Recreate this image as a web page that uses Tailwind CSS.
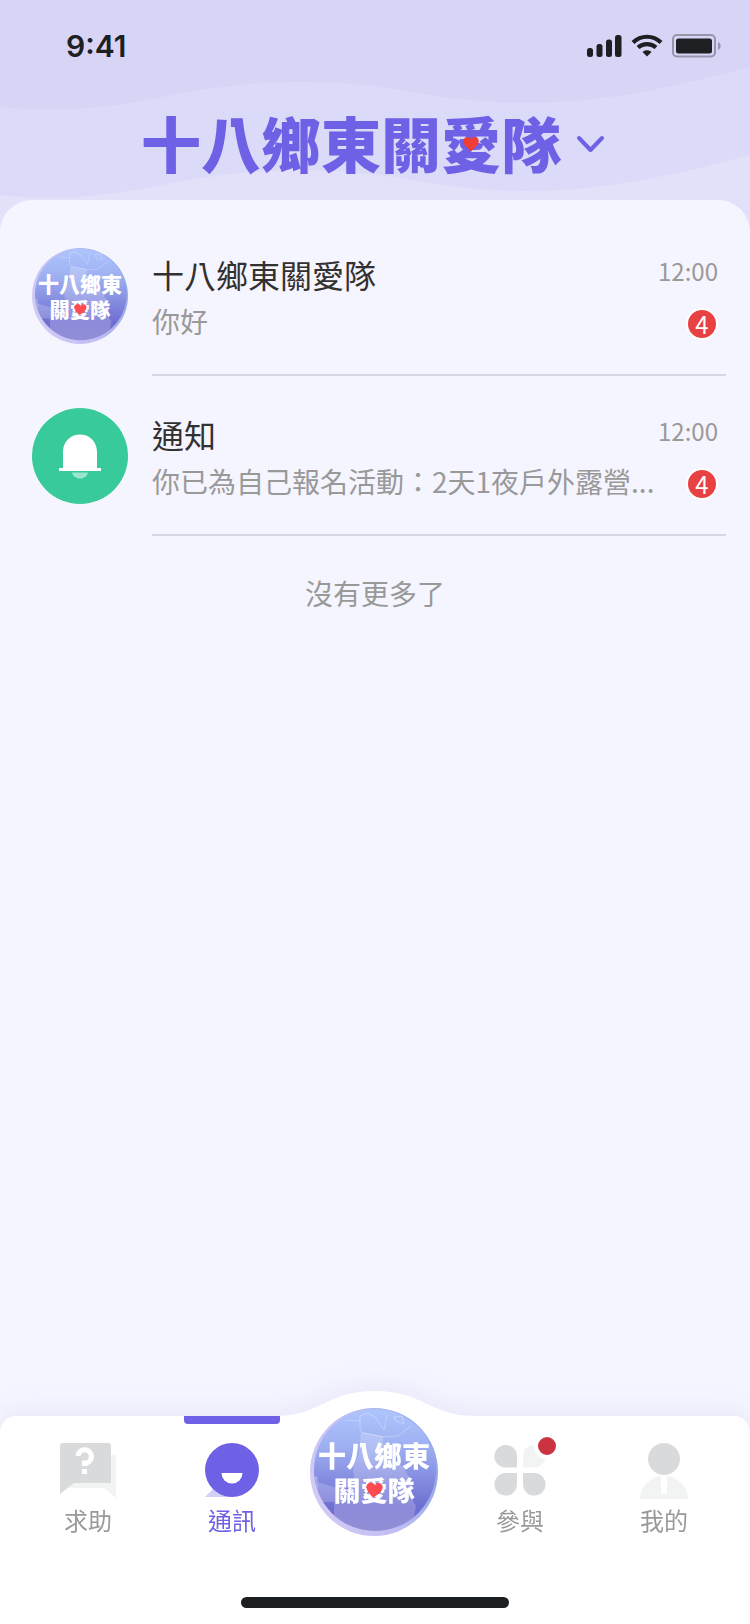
<!DOCTYPE html>
<html lang="zh-Hant">

<head>
    <meta charset="UTF-8">
    <meta name="viewport" content="width=device-width, initial-scale=1.0">
    <title>十八鄉東關愛隊</title>
    <script src="https://cdn.jsdelivr.net/npm/@tailwindcss/browser@4"></script>
</head>

<body class="font-['Noto_Sans_CJK_TC',sans-serif] bg-[#e3e0f9]">

    <!-- shared parts of the team logo -->
    <svg class="absolute w-0 h-0" aria-hidden="true">
        <defs>
            <linearGradient id="logo-ring" x1="0" y1="0.7" x2="1" y2="0.3">
                <stop offset="0" stop-color="#d3cbf6" />
                <stop offset="0.5" stop-color="#c0bdf4" />
                <stop offset="1" stop-color="#8ba6e4" />
            </linearGradient>
            <linearGradient id="logo-fill" x1="0" y1="0" x2="0" y2="1">
                <stop offset="0" stop-color="#adc5fd" />
                <stop offset="0.3" stop-color="#9fb0f2" />
                <stop offset="0.8" stop-color="#6f6fd1" />
                <stop offset="1" stop-color="#7672cc" />
            </linearGradient>
            <clipPath id="logo-clip">
                <circle cx="65" cy="62" r="61" />
            </clipPath>
        </defs>
        <symbol id="logo-bg" viewBox="0 0 128 128">
            <circle cx="64" cy="64" r="64" fill="url(#logo-ring)" />
            <circle cx="65" cy="62" r="61" fill="url(#logo-fill)" />
            <g clip-path="url(#logo-clip)">
                <path d="M51 24L73 28V49C80 50 85 52 90 56C96 62 99 68 101 76V90L106 98L104 108L90 128H24V94H0V69H7V74L24 79L40 82L44 70L43 60L49 46Z" fill="#fff" fill-opacity="0.2" />
                <path d="M35 12L50 13L50 8L57 5L65 9L74 22L77 7M84 9L92 8L94 16L86 13ZM50 13V22L54 25L73 29L88 28L101 18" fill="none" stroke="#fff" stroke-opacity="0.3" />
                <path d="M0 69H7V94" fill="none" stroke="#fff" stroke-opacity="0.3" />
            </g>
        </symbol>
        <symbol id="logo-heart" viewBox="0 0 128 128">
            <path d="M63 89C58 84 55 79 58 76C61 74 64 75 65 78C67 74 71 75 72 78C73 82 69 86 63 89Z" fill="#ff4b50" stroke="#ff4b50" />
        </symbol>
    </svg>

    <div class="flex flex-col min-h-screen">

        <header class="relative">
            <svg class="absolute inset-x-0 top-0 w-full h-[240px]" viewBox="0 0 750 240" preserveAspectRatio="none" aria-hidden="true">
                <path fill="#dcdaf9" d="M0 195C50 200 90 198 140 189C200 178 240 170 300 170C400 170 430 191 530 191C610 191 690 171 750 155V0H0Z" />
                <path fill="#d8d4f6" d="M0 107C50 112 90 110 140 101C200 90 240 82 300 82C400 82 430 103 530 103C610 103 690 83 750 67V0H0Z" />
            </svg>

            <div class="relative flex items-center justify-between h-[92px] pl-[66px] pr-[28px] text-[#1d2023]">
                <span class="font-['Inter',sans-serif] text-[30px] leading-9 font-semibold">9:41</span>
                <div class="flex items-center gap-[9px]">
                    <svg class="w-[35px] h-6" viewBox="0 0 35 24" fill="currentColor">
                        <rect x="0" y="14" width="6" height="9" rx="2.500" />
                        <rect x="9.500" y="10" width="6" height="13" rx="2.500" />
                        <rect x="19" y="5.500" width="6" height="17.500" rx="2.500" />
                        <rect x="28" y="1" width="6.500" height="22" rx="2.500" />
                    </svg>
                    <svg class="w-8 h-6" viewBox="0 0 32 24" fill="none" stroke="currentColor" stroke-width="4.200">
                        <path d="M2 8.500C10 0.800 22 0.800 30 8.500" />
                        <path d="M7 13.500C12 9 20 9 25 13.500" />
                        <path d="M11.500 18C14 15.500 18 15.500 20.500 18L16 22.500Z" fill="currentColor" stroke="none" />
                    </svg>
                    <svg class="w-[50px] h-6" viewBox="0 0 50 24">
                        <rect x="1" y="1" width="42" height="21.500" rx="4" fill="none" stroke="#1d2023" stroke-opacity="0.35" stroke-width="2" />
                        <rect x="4" y="4.500" width="36" height="15" rx="2.500" fill="#1d2023" />
                        <path d="M46 8C49.500 9.500 49.500 14.500 46 16Z" fill="#1d2023" fill-opacity="0.35" />
                    </svg>
                </div>
            </div>

            <h1 class="relative flex justify-center pt-5 pb-7">
                <button class="flex items-center gap-3 text-[60px] leading-[60px] font-black text-[#6e61e5]">
                    <span>十八鄉東關<span class="relative">愛<svg class="absolute left-1/2 top-1/2 -translate-x-1/2 -translate-y-1.5 w-4 h-4" viewBox="0 0 16 16"><path fill="#f03e36" d="M8 15.500L1.500 9C-0.500 6.500 0 3 2.500 1.500C4.500 0.300 7 1 8 3C9 1 11.500 0.300 13.500 1.500C16 3 16.500 6.500 14.500 9Z" /></svg></span>隊</span>
                    <svg class="w-9 h-9" viewBox="0 0 36 36" fill="none" stroke="currentColor" stroke-width="4" stroke-linecap="round" stroke-linejoin="round">
                        <path d="M6 14L17.500 26L29 14" />
                    </svg>
                </button>
            </h1>
        </header>

        <main class="relative flex-1 pt-4 rounded-t-[32px] bg-[#f5f5ff]">
            <ul>
                <li class="flex pl-8 pr-6 gap-6">
                    <svg class="w-24 h-24 mt-8 shrink-0" viewBox="0 0 128 128" role="img" aria-label="十八鄉東關愛隊">
                        <use href="#logo-bg" />
                        <text x="64" y="59" fill="#fff" font-size="28" font-weight="900" text-anchor="middle">十八鄉東</text>
                        <text x="64" y="93" fill="#fff" font-size="27" font-weight="900" text-anchor="middle">關愛隊</text>
                        <use href="#logo-heart" />
                    </svg>
                    <a href="#" class="flex flex-1 min-w-0 gap-4 h-40 pt-9 pr-2 border-b-2 border-[#d7d7e2]">
                        <div class="flex-1 min-w-0">
                            <h2 class="text-[32px] leading-11 text-[#333030] truncate">十八鄉東關愛隊</h2>
                            <p class="mt-[3px] text-[28px] leading-11 text-[#999] truncate">你好</p>
                        </div>
                        <div class="flex flex-col items-end pt-[3px]">
                            <time class="text-2xl text-[#999]">12:00</time>
                            <span class="flex items-center justify-center w-8 h-8 mt-[21px] rounded-full border-2 border-white bg-[#e84141] text-2xl leading-7 text-white">4</span>
                        </div>
                    </a>
                </li>
                <li class="flex pl-8 pr-6 gap-6">
                    <svg class="w-24 h-24 mt-8 shrink-0" viewBox="0 0 96 96" role="img" aria-label="通知">
                        <circle cx="48" cy="48" r="48" fill="#38ca9b" />
                        <path fill="#fff" d="M31 60V44C31 20.500 65 20.500 65 44V60H69V63H27V60Z" />
                        <path fill="#fff" fill-opacity="0.5" d="M40 64.500H56C54 72.500 42 72.500 40 64.500Z" />
                    </svg>
                    <a href="#" class="flex flex-1 min-w-0 h-40 pt-9 pr-2 border-b-2 border-[#d7d7e2]">
                        <div class="flex-1 min-w-0">
                            <h2 class="text-[32px] leading-11 text-[#333030] truncate">通知</h2>
                            <p class="mt-[3px] text-[28px] leading-11 text-[#999] truncate">你已為自己報名活動：2天1夜戶外露營...</p>
                        </div>
                        <div class="flex flex-col items-end pt-[3px]">
                            <time class="text-2xl text-[#999]">12:00</time>
                            <span class="flex items-center justify-center w-8 h-8 mt-[21px] rounded-full border-2 border-white bg-[#e84141] text-2xl leading-7 text-white">4</span>
                        </div>
                    </a>
                </li>
            </ul>
            <p class="mt-[35px] text-center text-[28px] leading-11 text-[#999]">沒有更多了</p>
        </main>

        <div class="bg-[#f5f5ff]">
            <nav class="relative rounded-t-2xl bg-white drop-shadow-[0_-4px_14px_rgba(80,70,160,0.08)]">
                <svg class="absolute left-1/2 bottom-full -translate-x-1/2 w-[196px] h-[25px]" viewBox="0 0 196 25" aria-hidden="true">
                    <path fill="#fff" d="M0 25C44 24 50 0 98 0C146 0 152 24 196 25Z" />
                </svg>
                <div class="relative grid grid-cols-5 pl-4 pr-[14px] text-2xl leading-9 text-[#999]">
                    <a href="#" class="flex flex-col items-center gap-[3px] pt-[27px]">
                        <svg class="w-14 h-14" viewBox="0 0 56 56">
                            <path fill="#f2f4f4" d="M51 12H53A3 3 0 0 1 56 15V55L44 45H8L14 40H51Z" />
                            <path fill="#d9dadc" d="M3 0H48A3 3 0 0 1 51 3V40H14L0 51V3A3 3 0 0 1 3 0Z" />
                            <path fill="none" stroke="#fff" stroke-width="5.200" d="M18 13A6.700 6.700 0 1 1 24.600 20.200V23" />
                            <rect x="22" y="26" width="5" height="5" fill="#fff" />
                        </svg>
                        求助
                    </a>
                    <a href="#" class="relative flex flex-col items-center gap-[3px] pt-[27px] text-[#6e61e5]" aria-current="page">
                        <span class="absolute top-0 left-1/2 -translate-x-1/2 w-24 h-2 rounded-b bg-[#6e61e5]"></span>
                        <svg class="w-14 h-14" viewBox="0 0 56 56">
                            <path fill="#d4cff8" d="M1 54L12 43L28 54Z" />
                            <circle cx="28" cy="27" r="27" fill="#6e61e5" />
                            <path fill="#fff" d="M17.500 30H38.500A10.500 10.500 0 0 1 17.500 30Z" />
                        </svg>
                        通訊
                    </a>
                    <a href="#" class="-mt-2 mr-1 justify-self-center">
                        <svg class="w-32 h-32" viewBox="0 0 128 128" role="img" aria-label="十八鄉東關愛隊">
                            <use href="#logo-bg" />
                            <text x="64" y="59" fill="#fff" font-size="28" font-weight="900" text-anchor="middle">十八鄉東</text>
                            <text x="64" y="93" fill="#fff" font-size="27" font-weight="900" text-anchor="middle">關愛隊</text>
                            <use href="#logo-heart" />
                        </svg>
                    </a>
                    <a href="#" class="flex flex-col items-center gap-[3px] pt-[27px]">
                        <span class="relative">
                            <svg class="w-14 h-14" viewBox="0 0 56 56">
                                <g fill="#d9dadc">
                                    <path d="M25 24.500H14A11.300 11.300 0 1 1 25 13Z" />
                                    <path d="M25 30V41A11.300 11.300 0 1 1 14 30Z" />
                                    <path d="M31 30H42A11.300 11.300 0 1 1 31 41Z" />
                                </g>
                                <path fill="#f2f4f4" d="M31 24.500V13A11.300 11.300 0 1 1 42 24.500Z" />
                            </svg>
                            <span class="absolute -top-[10px] -right-[12px] w-[26px] h-[26px] rounded-full border-4 border-white bg-[#cc3340]"></span>
                        </span>
                        參與
                    </a>
                    <a href="#" class="flex flex-col items-center gap-[3px] pt-[27px]">
                        <svg class="w-14 h-14" viewBox="0 0 56 56">
                            <path fill="#f2f4f4" d="M4 56A24 23 0 0 1 52 56Z" />
                            <rect x="25" y="32" width="6" height="19" fill="#fff" />
                            <circle cx="28" cy="16" r="16" fill="#d9dadc" />
                        </svg>
                        我的
                    </a>
                </div>
                <div class="w-[268px] h-[11px] mx-auto mt-[59px] rounded-full bg-[#1d2023]"></div>
                <div class="h-4"></div>
            </nav>
        </div>
    </div>
</body>

</html>
